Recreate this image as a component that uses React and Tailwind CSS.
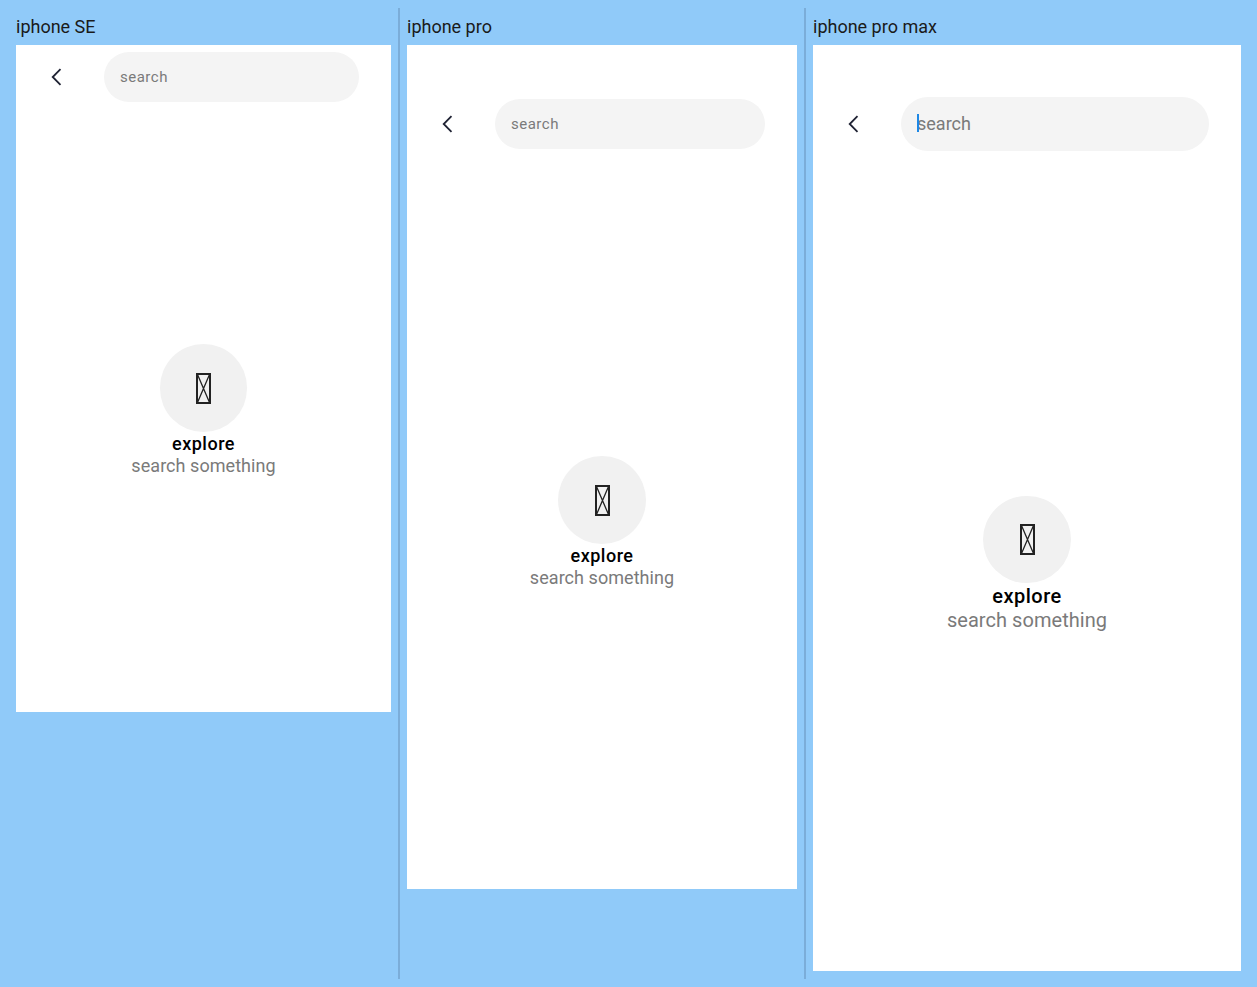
const devices = [
  {
    label: "iphone SE",
    frame: "w-[375px] h-[667px]",
    header: "pt-[7px]",
    search: "h-[50px] text-[15px] tracking-[0.5px] pl-4",
    title: "text-[18px] leading-[23px] tracking-[0.5px]",
    sub: "text-[18px] leading-[21px] tracking-[0.05px]",
  },
  {
    label: "iphone pro",
    frame: "w-[390px] h-[844px]",
    header: "pt-[54px]",
    search: "h-[50px] text-[15px] tracking-[0.5px] pl-4",
    title: "text-[18px] leading-[23px] tracking-[0.5px]",
    sub: "text-[18px] leading-[21px] tracking-[0.05px]",
  },
  {
    label: "iphone pro max",
    frame: "w-[428px] h-[926px]",
    header: "pt-[52px]",
    search: "h-[54px] text-[18px] pl-4 pb-[2px]",
    title: "text-[20px] leading-[25px] tracking-[0.5px] mt-[1px]",
    sub: "text-[20px] leading-[23px] tracking-[0.05px]",
    focused: true,
  },
];

function BackIcon() {
  return (
    <svg width="11" height="18" viewBox="0 0 11 18" fill="none" className="text-[#1f2233]">
      <path d="M9.5 1.2 L1.7 9 L9.5 16.8" stroke="currentColor" strokeWidth="1.8" />
    </svg>
  );
}

// missing glyph box, the reference shows an icon font that never loaded
function TofuIcon() {
  return (
    <svg width="15" height="31" viewBox="0 0 15 31" fill="none" className="text-[#222222]">
      <rect x="1" y="1" width="13" height="29" stroke="currentColor" strokeWidth="2" />
      <path d="M1.5 1.5 L13.5 29.5 M13.5 1.5 L1.5 29.5" stroke="currentColor" strokeWidth="1.3" />
    </svg>
  );
}

function Phone({ device }) {
  return (
    <div className="flex flex-col shrink-0">
      <div className="h-[37px] flex items-center text-[18px] text-[#1a1a1a] font-['Roboto',sans-serif]">
        {device.label}
      </div>
      <div className={`${device.frame} bg-white flex flex-col font-['Roboto',sans-serif]`}>
        <div className={`${device.header} flex items-center pl-4 pr-8 gap-6`}>
          <div className="w-12 flex items-center justify-center">
            <BackIcon />
          </div>
          <div className="relative flex-1">
            <input
              placeholder="search"
              className={`${device.search} w-full rounded-full bg-[#f4f4f4] outline-none placeholder:text-[#7a7a7a]`}
            />
            {device.focused && (
              <span className="absolute left-4 top-[17px] w-[2px] h-[18px] bg-[#1e88e5]" />
            )}
          </div>
        </div>
        <div className="pt-[6px] flex-1 flex flex-col items-center justify-center">
          <div className="w-[87.5px] h-[87.5px] rounded-full bg-[#f1f1f1] flex items-center justify-center">
            <TofuIcon />
          </div>
          <div className={`${device.title} font-medium text-black`}>explore</div>
          <div className={`${device.sub} text-[#7a7a7a]`}>search something</div>
        </div>
      </div>
    </div>
  );
}

export default function App() {
  return (
    <div className="w-[1257px] h-[987px] bg-[#90caf9] py-2 pl-4 flex items-stretch overflow-hidden">
      <Phone device={devices[0]} />
      <div className="w-[2px] bg-[#7badd9] mx-[7px]" />
      <Phone device={devices[1]} />
      <div className="w-[2px] bg-[#7badd9] mx-[7px]" />
      <Phone device={devices[2]} />
    </div>
  );
}
